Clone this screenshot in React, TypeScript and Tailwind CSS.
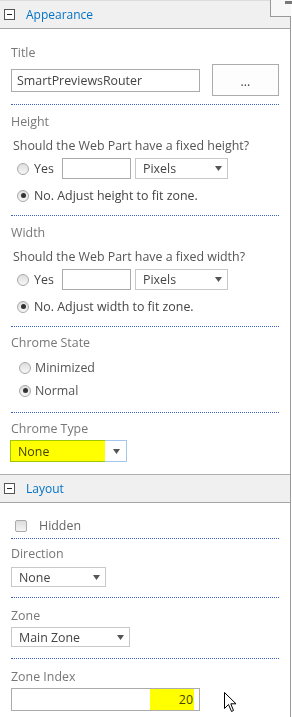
import type { ReactNode } from 'react'

const FONT = "font-['Open_Sans','Noto_Sans',sans-serif]"

function Radio({ checked }: { checked?: boolean }) {
  return (
    <span className="flex h-[12px] w-[12px] shrink-0 items-center justify-center rounded-full border border-[#a8a8a8] bg-gradient-to-b from-[#dedede] to-[#f6f6f6]">
      {checked && <span className="h-[5px] w-[5px] rounded-full bg-[#333]" />}
    </span>
  )
}

function Arrow() {
  return (
    <svg width="7" height="5" viewBox="0 0 7 5" className="shrink-0">
      <polygon points="0,0 7,0 3.5,5" fill="#555" />
    </svg>
  )
}

function Select({ value, className }: { value: string; className: string }) {
  return (
    <div
      className={`flex items-center justify-between border border-[#c8c8c8] bg-white pl-[7px] pr-[5px] text-[#444] ${className}`}
    >
      <span>{value}</span>
      <Arrow />
    </div>
  )
}

function MinusBox() {
  return (
    <span className="flex h-[11px] w-[11px] items-center justify-center border border-[#555] bg-white">
      <span className="h-px w-[5px] bg-[#222]" />
    </span>
  )
}

function Header({ children }: { children: ReactNode }) {
  return (
    <div className="flex h-[27px] items-center gap-[11px] bg-[#f0f0f0] pl-[4px] text-[#0072c6]">
      <MinusBox />
      <span className="text-[12px]">{children}</span>
    </div>
  )
}

function Label({ children }: { children: ReactNode }) {
  return <p className="text-[#777]">{children}</p>
}

function Section({
  children,
  className,
  last,
}: {
  children: ReactNode
  className: string
  last?: boolean
}) {
  return (
    <div
      className={`mx-[11px] ${last ? '' : 'border-b border-dotted border-[#3d62c4]'} ${className}`}
    >
      {children}
    </div>
  )
}

function SizeSection({ label, dim }: { label: string; dim: string }) {
  return (
    <Section className="pt-[8px] pb-[11px]">
      <Label>{label}</Label>
      <p className="mt-[7px] pl-[2px] text-[#555]">
        Should the Web Part have a fixed {dim}?
      </p>
      <div className="mt-[4px] flex h-[21px] items-center pl-[6px] text-[#444]">
        <Radio />
        <span className="ml-[5px] w-[28px]">Yes</span>
        <div className="h-[21px] w-[69px] border border-[#ababab] bg-white" />
        <Select value="Pixels" className="ml-[4px] h-[21px] w-[93px]" />
      </div>
      <div className="mt-[8px] flex items-center gap-[5px] pl-[6px] text-[#444]">
        <Radio checked />
        <span>No. Adjust {dim} to fit zone.</span>
      </div>
    </Section>
  )
}

export default function App() {
  return (
    <div
      className={`relative h-[717px] w-[292px] overflow-hidden bg-white text-[12.4px] leading-[17px] ${FONT}`}
    >
      <div className="h-full w-[291px] border-r border-[#999]">
        <div className="border-t border-b border-t-[#dcdcdc] border-b-[#a5a5a5]">
          <Header>Appearance</Header>
        </div>

        <Section className="pt-[15px] pb-[8px]">
          <Label>Title</Label>
          <div className="mt-[3px] flex h-[32px] items-center justify-between">
            <div className="flex h-[23px] w-[189px] items-center border border-[#ababab] bg-white pl-[5px] text-[#444]">
              SmartPreviewsRouter
            </div>
            <div className="flex h-[32px] w-[67px] items-center justify-center border border-[#ababab] bg-[#fdfdfd] pt-[3px] text-[#444]">
              ...
            </div>
          </div>
        </Section>

        <SizeSection label="Height" dim="height" />
        <SizeSection label="Width" dim="width" />

        <Section className="pt-[7px] pb-[13px]">
          <Label>Chrome State</Label>
          <div className="mt-[8px] flex items-center gap-[4px] pl-[8px] text-[#555]">
            <Radio />
            <span>Minimized</span>
          </div>
          <div className="mt-[6px] flex items-center gap-[4px] pl-[8px] text-[#555]">
            <Radio checked />
            <span>Normal</span>
          </div>
        </Section>

        <Section last className="pt-[7px] pb-[12px]">
          <Label>Chrome Type</Label>
          <div className="relative -ml-px mt-[3px] w-[117px]">
            <div className="flex h-[22px] items-center justify-between border border-[#a4c6ea] bg-white pl-[7px] pr-[6px] text-[#444]">
              <span>None</span>
              <Arrow />
            </div>
            <div className="absolute left-0 top-0 h-[22px] w-[95px] bg-[#ffff00] mix-blend-multiply" />
          </div>
        </Section>

        <div className="border-t border-b border-t-[#b0b0b0] border-b-[#a5a5a5]">
          <Header>Layout</Header>
        </div>

        <Section className="pt-[14px] pb-[4px]">
          <div className="flex items-center gap-[12px] pl-[4px] text-[#666]">
            <span className="h-[12px] w-[12px] rounded-[2px] border border-[#aaa] bg-gradient-to-b from-[#dcdcdc] to-[#f4f4f4]" />
            <span>Hidden</span>
          </div>
        </Section>

        <Section className="pt-[6px] pb-[10px]">
          <Label>Direction</Label>
          <Select value="None" className="mt-[5px] h-[20px] w-[95px]" />
        </Section>

        <Section className="pt-[9px] pb-[11px]">
          <Label>Zone</Label>
          <Select value="Main Zone" className="mt-[3px] h-[20px] w-[119px]" />
        </Section>

        <Section last className="pt-[9px]">
          <Label>Zone Index</Label>
          <div className="relative mt-[3px] w-[189px]">
            <div className="flex h-[23px] items-center justify-end border border-[#ababab] bg-white pr-[6px] text-[#444]">
              20
            </div>
            <div className="absolute right-[6px] top-px h-[21px] w-[44px] bg-[#ffff00] mix-blend-multiply" />
          </div>
        </Section>
      </div>

      <div className="absolute right-[1px] top-0 h-[17px] w-[21px] border-l border-b border-[#999] bg-[#f7f7f7]">
        <div className="absolute right-[-1px] top-[1px] h-[3px] w-[7px] bg-[#777]" />
      </div>

      <svg
        width="13"
        height="21"
        viewBox="0 0 13 21"
        className="absolute left-[224px] top-[692px]"
      >
        <path
          d="M0.5 0.5 L0.5 16.5 L4.5 12.5 L7.5 19.5 L9.5 18.5 L6.8 11.8 L12 11.8 Z"
          fill="#fff"
          stroke="#000"
          strokeWidth="1"
          strokeLinejoin="miter"
        />
      </svg>
    </div>
  )
}
